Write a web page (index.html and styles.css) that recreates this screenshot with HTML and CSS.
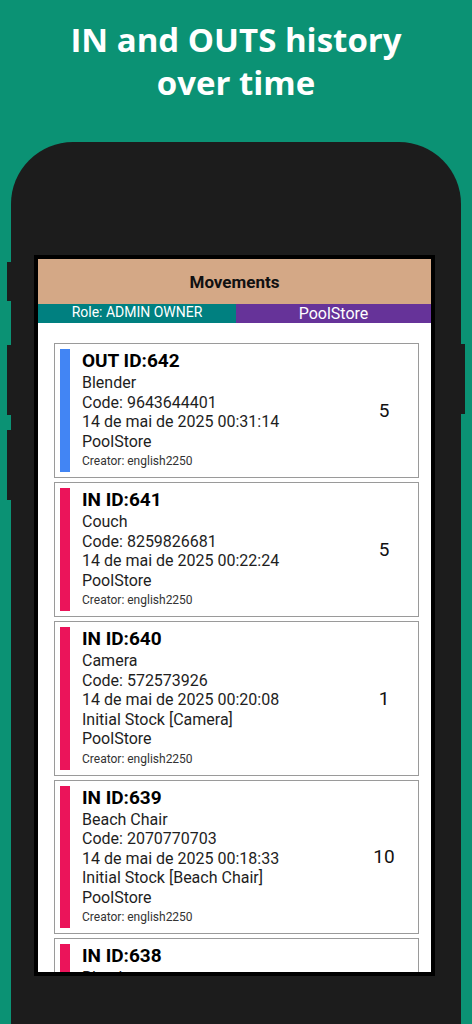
FILE: index.html
```html
<!DOCTYPE html>
<html lang="en">
<head>
    <meta charset="UTF-8">
    <meta name="viewport" content="width=device-width, initial-scale=1.0">
    <title>Movements</title>
    <link rel="stylesheet" href="styles.css">
</head>
<body>
    <h1 class="promo">IN and OUTS history<br>over time</h1>

    <div class="phone">
        <span class="side-btn left b1"></span>
        <span class="side-btn left b2"></span>
        <span class="side-btn left b3"></span>
        <span class="side-btn right b4"></span>

        <div class="screen">
            <div class="topbar">Movements</div>
            <div class="infobar">
                <div class="role">Role: ADMIN OWNER</div>
                <div class="store">PoolStore</div>
            </div>

            <div class="list">
                <div class="card">
                    <div class="mark out"></div>
                    <div class="info">
                        <div class="title">OUT ID:642</div>
                        <div class="line">Blender</div>
                        <div class="line">Code: 9643644401</div>
                        <div class="line">14 de mai de 2025 00:31:14</div>
                        <div class="line">PoolStore</div>
                        <div class="creator">Creator: english2250</div>
                    </div>
                    <div class="qty">5</div>
                </div>

                <div class="card">
                    <div class="mark in"></div>
                    <div class="info">
                        <div class="title">IN ID:641</div>
                        <div class="line">Couch</div>
                        <div class="line">Code: 8259826681</div>
                        <div class="line">14 de mai de 2025 00:22:24</div>
                        <div class="line">PoolStore</div>
                        <div class="creator">Creator: english2250</div>
                    </div>
                    <div class="qty">5</div>
                </div>

                <div class="card">
                    <div class="mark in"></div>
                    <div class="info">
                        <div class="title">IN ID:640</div>
                        <div class="line">Camera</div>
                        <div class="line">Code: 572573926</div>
                        <div class="line">14 de mai de 2025 00:20:08</div>
                        <div class="line">Initial Stock [Camera]</div>
                        <div class="line">PoolStore</div>
                        <div class="creator">Creator: english2250</div>
                    </div>
                    <div class="qty">1</div>
                </div>

                <div class="card">
                    <div class="mark in"></div>
                    <div class="info">
                        <div class="title">IN ID:639</div>
                        <div class="line">Beach Chair</div>
                        <div class="line">Code: 2070770703</div>
                        <div class="line">14 de mai de 2025 00:18:33</div>
                        <div class="line">Initial Stock [Beach Chair]</div>
                        <div class="line">PoolStore</div>
                        <div class="creator">Creator: english2250</div>
                    </div>
                    <div class="qty">10</div>
                </div>

                <div class="card">
                    <div class="mark in"></div>
                    <div class="info">
                        <div class="title">IN ID:638</div>
                        <div class="line">Blender</div>
                        <div class="line">Code: 9643644401</div>
                        <div class="line">14 de mai de 2025 00:16:02</div>
                        <div class="line">PoolStore</div>
                        <div class="creator">Creator: english2250</div>
                    </div>
                    <div class="qty">5</div>
                </div>
            </div>
        </div>
    </div>
</body>
</html>
```

FILE: styles.css
```css
body {
    margin: 0;
    padding: 0;
    background: #0b9274;
    height: 1024px;
    overflow: hidden;
    font-family: Roboto, "Liberation Sans", sans-serif;
}
.promo {
    margin: 0;
    padding-top: 18px;
    font-family: "Open Sans", "Liberation Sans", sans-serif;
    font-weight: 700;
    font-size: 33px;
    line-height: 43px;
    color: white;
    text-align: center;
}
.phone {
    position: relative;
    box-sizing: border-box;
    margin: 38px 11px 0 11px;
    height: 882px;
    background: #1c1c1c;
    border-radius: 62px 62px 0 0;
    padding: 113px 26px 0 23px;
}
.side-btn {
    position: absolute;
    width: 4px;
    background: #1c1c1c;
}
.side-btn.left {
    left: -4px;
}
.side-btn.right {
    right: -4px;
}
.b1 { top: 120px; height: 39px; }
.b2 { top: 203px; height: 70px; }
.b3 { top: 288px; height: 70px; }
.b4 { top: 202px; height: 70px; }

.screen {
    height: 713px;
    border: 4px solid #000;
    background: white;
    overflow: hidden;
}
.topbar {
    height: 45px;
    background: #d4a886;
    color: #111;
    font-weight: 700;
    font-size: 17px;
    display: flex;
    align-items: center;
    justify-content: center;
}
.infobar {
    display: flex;
    height: 19px;
    color: white;
}
.role {
    flex: 1;
    background: #008080;
    font-size: 14px;
    line-height: 16px;
    text-align: center;
}
.store {
    flex: 0 0 195px;
    background: #663399;
    font-size: 16px;
    line-height: 20px;
    text-align: center;
}
.list {
    padding: 20px 12px 0 16px;
    display: flex;
    flex-direction: column;
    gap: 4px;
}
.card {
    display: flex;
    align-items: stretch;
    border: 1px solid #9a9a9a;
    padding: 5px;
}
.mark {
    width: 10px;
    flex-shrink: 0;
    margin-right: 12px;
}
.mark.out {
    background: #4285f4;
}
.mark.in {
    background: #eb145a;
}
.info {
    flex: 1;
    color: #1e1e1e;
}
.title {
    font-size: 19px;
    font-weight: 700;
    line-height: 24px;
    color: #000;
}
.line {
    font-size: 16px;
    line-height: 19.5px;
}
.creator {
    font-size: 12px;
    line-height: 21px;
    color: #333;
}
.qty {
    width: 58px;
    display: flex;
    align-items: center;
    justify-content: center;
    font-size: 19px;
    color: #111;
}
```
